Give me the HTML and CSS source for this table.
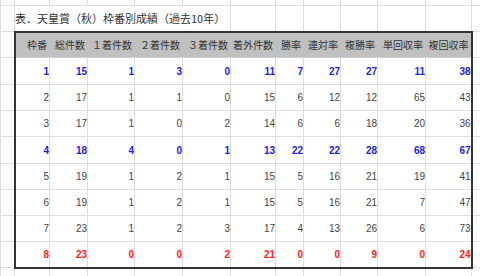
FILE: index.html
```html
<!DOCTYPE html>
<html lang="ja">
<head>
<meta charset="utf-8">
<title>天皇賞（秋）枠番別成績</title>
<link rel="stylesheet" href="styles.css">
</head>
<body>
<table class="sheet">
  <colgroup>
    <col class="c-a"><col class="c1"><col class="c2"><col class="c3"><col class="c4"><col class="c5"><col class="c6"><col class="c7"><col class="c8"><col class="c9"><col class="c10"><col class="c11"><col class="c-z">
  </colgroup>
  <tr class="r-top"><td></td><td></td><td></td><td></td><td></td><td></td><td></td><td></td><td></td><td></td><td></td><td></td><td></td></tr>
  <tr class="r-title"><td></td><td class="title" colspan="5">表．天皇賞（秋）枠番別成績（過去10年）</td><td></td><td></td><td></td><td></td><td></td><td></td><td></td></tr>
  <tr class="r-head"><td></td><th class="first">枠番</th><th>総件数</th><th>１着件数</th><th>２着件数</th><th>３着件数</th><th>着外件数</th><th>勝率</th><th>連対率</th><th>複勝率</th><th>単回収率</th><th class="last">複回収率</th><td></td></tr>
  <tr class="r-a hl-blue"><td></td><td class="n first">1</td><td class="n">15</td><td class="n">1</td><td class="n">3</td><td class="n">0</td><td class="n">11</td><td class="n">7</td><td class="n">27</td><td class="n">27</td><td class="n">11</td><td class="n last">38</td><td></td></tr>
  <tr class="r-b"><td></td><td class="n first">2</td><td class="n">17</td><td class="n">1</td><td class="n">1</td><td class="n">0</td><td class="n">15</td><td class="n">6</td><td class="n">12</td><td class="n">12</td><td class="n">65</td><td class="n last">43</td><td></td></tr>
  <tr class="r-b"><td></td><td class="n first">3</td><td class="n">17</td><td class="n">1</td><td class="n">0</td><td class="n">2</td><td class="n">14</td><td class="n">6</td><td class="n">6</td><td class="n">18</td><td class="n">20</td><td class="n last">36</td><td></td></tr>
  <tr class="r-a hl-blue"><td></td><td class="n first">4</td><td class="n">18</td><td class="n">4</td><td class="n">0</td><td class="n">1</td><td class="n">13</td><td class="n">22</td><td class="n">22</td><td class="n">28</td><td class="n">68</td><td class="n last">67</td><td></td></tr>
  <tr class="r-b"><td></td><td class="n first">5</td><td class="n">19</td><td class="n">1</td><td class="n">2</td><td class="n">1</td><td class="n">15</td><td class="n">5</td><td class="n">16</td><td class="n">21</td><td class="n">19</td><td class="n last">41</td><td></td></tr>
  <tr class="r-b"><td></td><td class="n first">6</td><td class="n">19</td><td class="n">1</td><td class="n">2</td><td class="n">1</td><td class="n">15</td><td class="n">5</td><td class="n">16</td><td class="n">21</td><td class="n">7</td><td class="n last">47</td><td></td></tr>
  <tr class="r-b"><td></td><td class="n first">7</td><td class="n">23</td><td class="n">1</td><td class="n">2</td><td class="n">3</td><td class="n">17</td><td class="n">4</td><td class="n">13</td><td class="n">26</td><td class="n">6</td><td class="n last">73</td><td></td></tr>
  <tr class="r-b hl-red end"><td></td><td class="n first">8</td><td class="n">23</td><td class="n">0</td><td class="n">0</td><td class="n">2</td><td class="n">21</td><td class="n">0</td><td class="n">0</td><td class="n">9</td><td class="n">0</td><td class="n last">24</td><td></td></tr>
  <tr class="r-bottom"><td></td><td></td><td></td><td></td><td></td><td></td><td></td><td></td><td></td><td></td><td></td><td></td><td></td></tr>
</table>
</body>
</html>
```
FILE: styles.css
```css
html, body {
  margin: 0;
  padding: 0;
  background: #ffffff;
  overflow: hidden;
}

.sheet {
  border-collapse: collapse;
  table-layout: fixed;
  width: 480px;
  margin-top: -1px;
  font-family: "Liberation Sans", "Noto Sans CJK JP", sans-serif;
  font-size: 10px;
  color: #444444;
}

.c-a { width: 14px; }
.c1 { width: 35px; }
.c2 { width: 38px; }
.c3 { width: 47px; }
.c4 { width: 48px; }
.c5 { width: 48px; }
.c6 { width: 45px; }
.c7 { width: 28px; }
.c8 { width: 37px; }
.c9 { width: 37px; }
.c10 { width: 48px; }
.c11 { width: 46px; }
.c-z { width: 9px; }

.sheet td,
.sheet th {
  border: 1px solid #dddddd;
  padding: 0;
  overflow: hidden;
  white-space: nowrap;
}

.r-top { height: 6px; }
.r-title { height: 26px; }
.r-head { height: 26px; }
.r-a { height: 27px; }
.r-b { height: 26px; }
.r-bottom { height: 9px; }

.title {
  font-family: "Noto Sans CJK JP", sans-serif;
  font-size: 11px;
  color: #333333;
  text-align: left;
  padding-left: 2px;
  vertical-align: middle;
}

.sheet th {
  background: #c0c0c0;
  font-family: "Noto Sans CJK JP", sans-serif;
  font-weight: normal;
  font-size: 10px;
  color: #333333;
  text-align: right;
  padding-right: 2px;
  border-top: 2px solid #333333;
  border-left-color: #c0c0c0;
  border-right-color: #c0c0c0;
  border-bottom-color: #d0d0d0;
}

.sheet .first { border-left: 2px solid #333333; }
.sheet .last { border-right: 2px solid #333333; }
.end td.n { border-bottom: 2px solid #333333; }

.n {
  text-align: right;
  padding-right: 4px;
  vertical-align: middle;
}

.hl-blue .n {
  color: #2020f0;
  font-weight: bold;
}

.hl-red .n {
  color: #ff2020;
  font-weight: bold;
}
```
